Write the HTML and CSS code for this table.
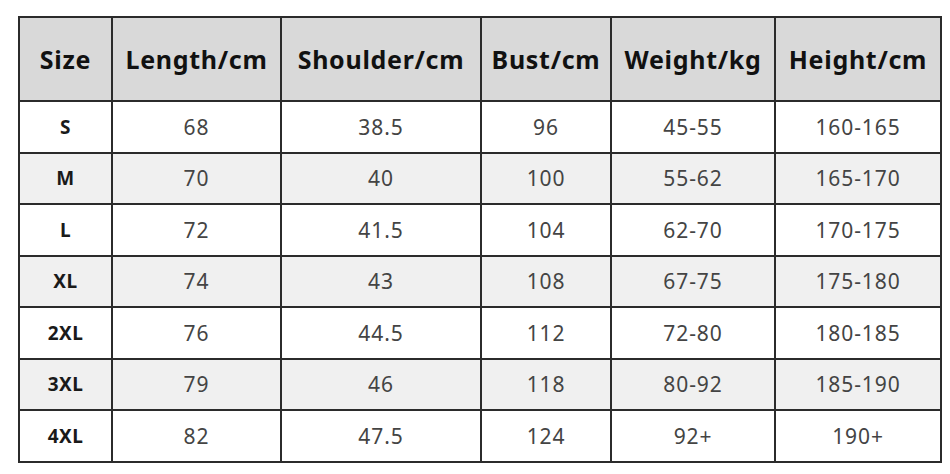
FILE: index.html
```html
<!DOCTYPE html>
<html>
<head>
<meta charset="utf-8">
<link rel="stylesheet" href="styles.css">
</head>
<body>
<div class="wrap">
<table class="size-table">
  <colgroup>
    <col class="c1"><col class="c2"><col class="c3"><col class="c4"><col class="c5"><col class="c6">
  </colgroup>
  <thead>
    <tr><th>Size</th><th>Length/cm</th><th>Shoulder/cm</th><th>Bust/cm</th><th>Weight/kg</th><th>Height/cm</th></tr>
  </thead>
  <tbody>
    <tr><td class="sz">S</td><td>68</td><td>38.5</td><td>96</td><td>45-55</td><td>160-165</td></tr>
    <tr><td class="sz">M</td><td>70</td><td>40</td><td>100</td><td>55-62</td><td>165-170</td></tr>
    <tr><td class="sz">L</td><td>72</td><td>41.5</td><td>104</td><td>62-70</td><td>170-175</td></tr>
    <tr><td class="sz">XL</td><td>74</td><td>43</td><td>108</td><td>67-75</td><td>175-180</td></tr>
    <tr><td class="sz">2XL</td><td>76</td><td>44.5</td><td>112</td><td>72-80</td><td>180-185</td></tr>
    <tr><td class="sz">3XL</td><td>79</td><td>46</td><td>118</td><td>80-92</td><td>185-190</td></tr>
    <tr><td class="sz">4XL</td><td>82</td><td>47.5</td><td>124</td><td>92+</td><td>190+</td></tr>
  </tbody>
</table>
</div>
</body>
</html>
```
FILE: styles.css
```css
html, body {
  margin: 0;
  padding: 0;
  background: #ffffff;
}
.wrap {
  padding: 16px 0 0 18px;
}
.size-table {
  border-collapse: collapse;
  table-layout: fixed;
  width: 922px;
  font-family: "Noto Sans", "Open Sans", sans-serif;
}
.c1 { width: 93px; }
.c2 { width: 169px; }
.c3 { width: 200px; }
.c4 { width: 130px; }
.c5 { width: 164px; }
.c6 { width: 166px; }
.size-table th,
.size-table td {
  border: 2px solid #2b2b2b;
  text-align: center;
  padding: 0;
}
.size-table th {
  height: 82px;
  background: #d9d9d9;
  color: #111;
  font-size: 25px;
  font-weight: 700;
  letter-spacing: 0.7px;
}
.size-table td {
  height: 49.5px;
  font-size: 21px;
  letter-spacing: 0.9px;
  color: #444;
}
.size-table td.sz {
  font-weight: 700;
  font-size: 19px;
  letter-spacing: 0.5px;
  color: #1a1a1a;
}
.size-table tbody tr:nth-child(even) td {
  background: #f0f0f0;
}
```
